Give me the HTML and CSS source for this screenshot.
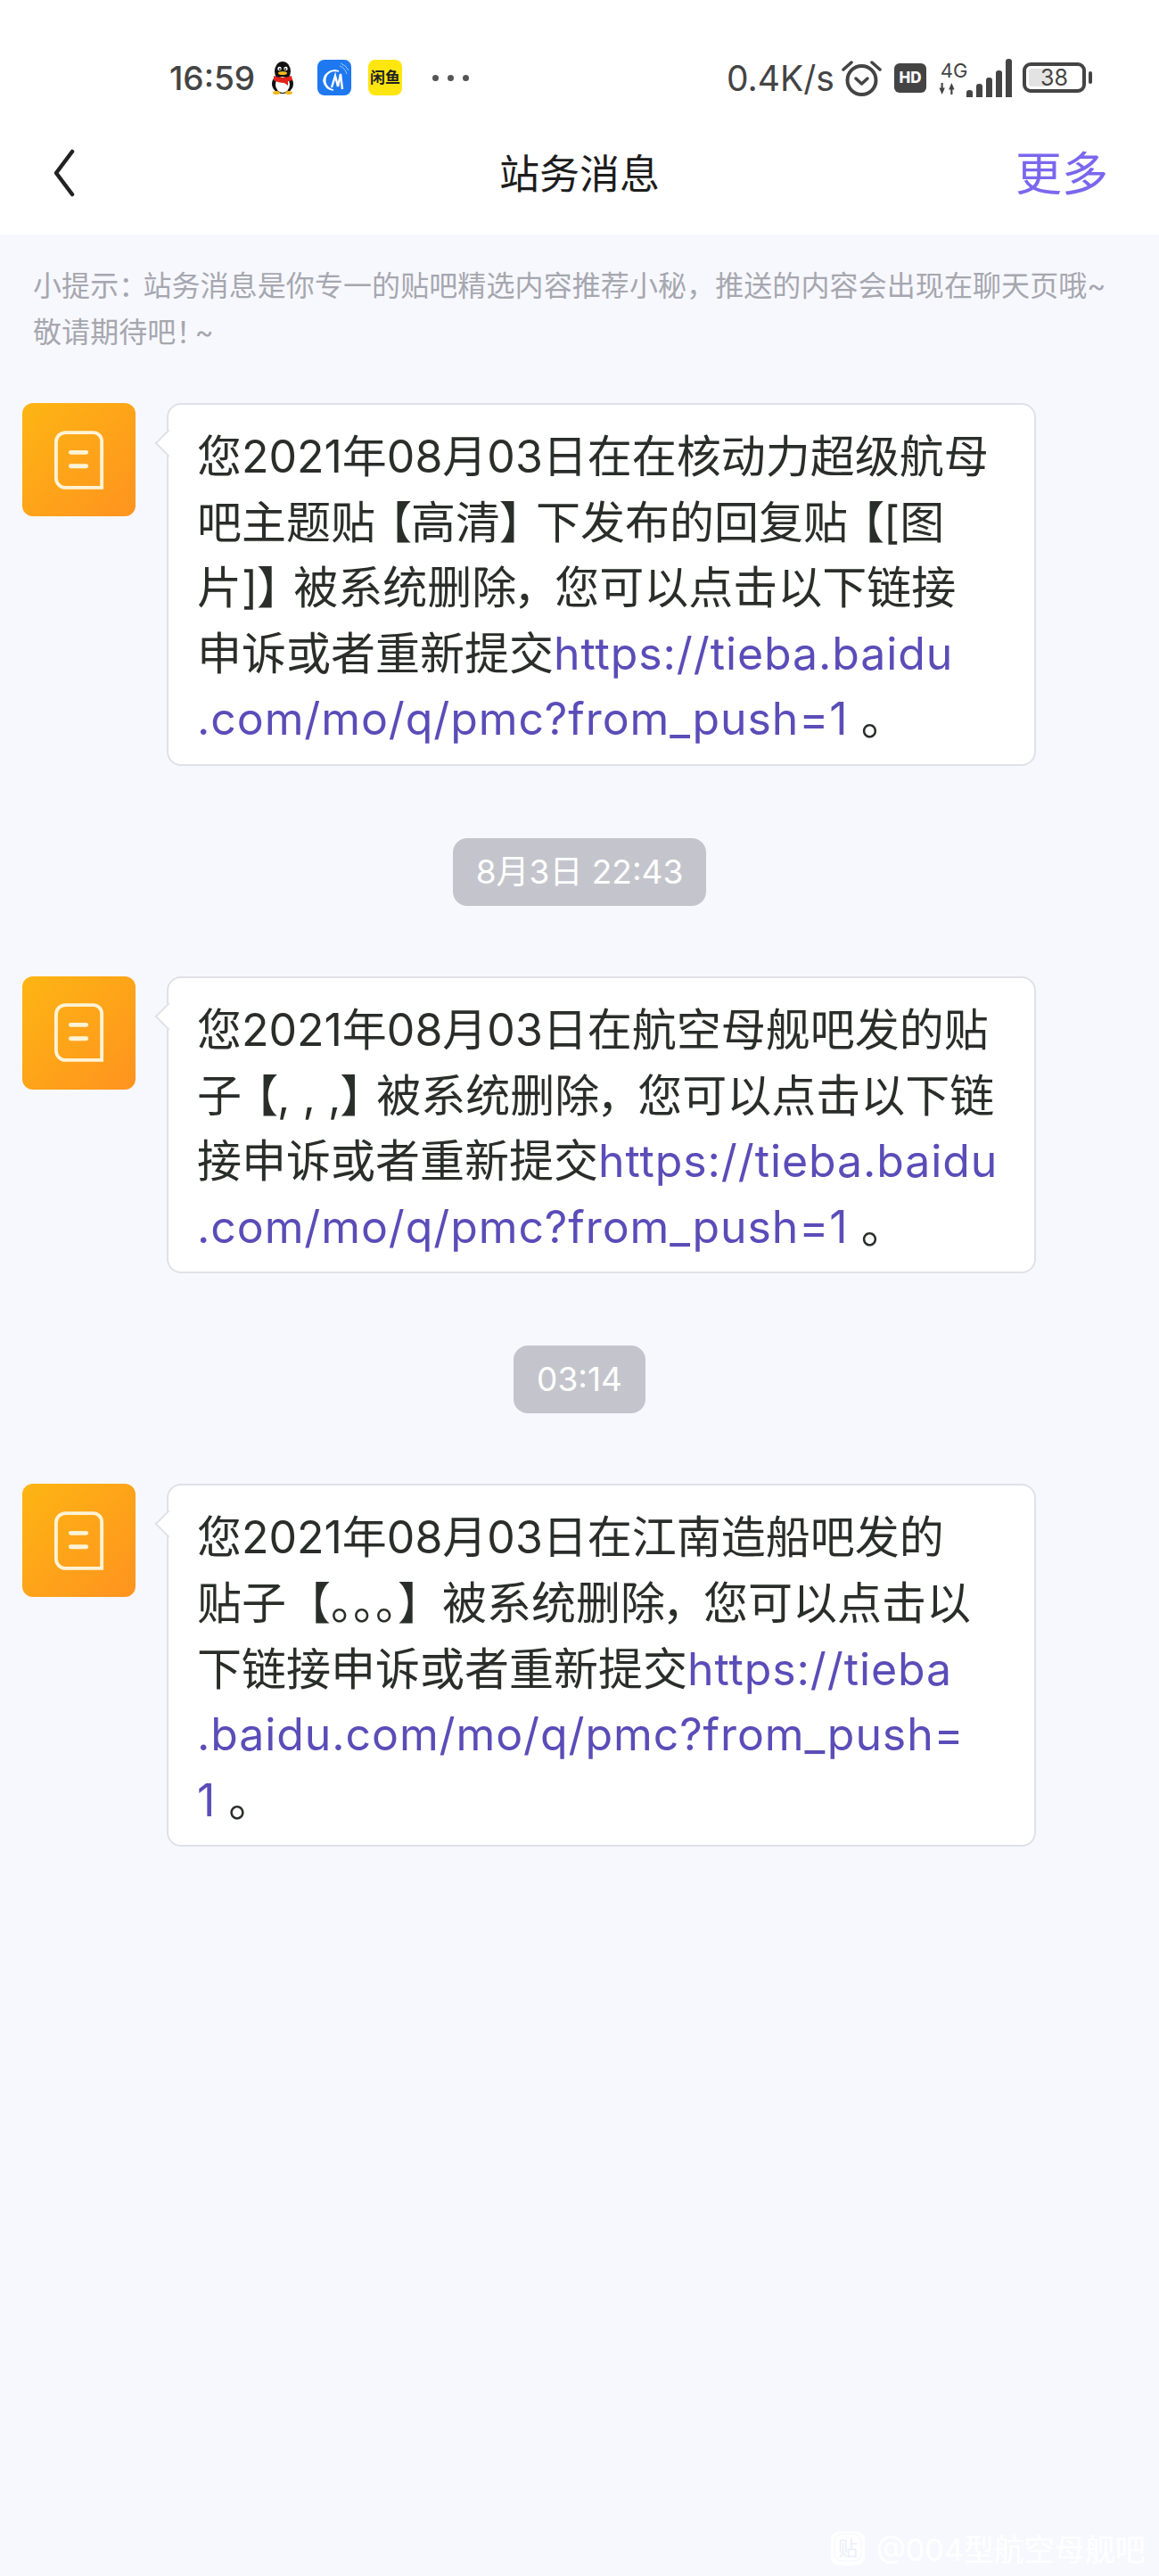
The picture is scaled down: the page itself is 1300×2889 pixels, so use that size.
FILE: index.html
```html
<!DOCTYPE html>
<html lang="zh-CN">
<head>
  <meta charset="UTF-8">
  <title>站务消息</title>
  <link rel="stylesheet" href="styles.css">
</head>
<body>
  <header class="top">
    <div class="status">
      <span class="time">16:59</span>
      <svg class="app qq" viewBox="0 0 38 40">
        <ellipse cx="19" cy="13" rx="9" ry="11" fill="#111"/>
        <ellipse cx="19" cy="27" rx="12" ry="11" fill="#111"/>
        <ellipse cx="19" cy="28" rx="8" ry="9" fill="#fff"/>
        <circle cx="15.5" cy="10" r="2.2" fill="#fff"/><circle cx="22.5" cy="10" r="2.2" fill="#fff"/>
        <circle cx="15.8" cy="10.4" r="1" fill="#111"/><circle cx="22.2" cy="10.4" r="1" fill="#111"/>
        <ellipse cx="19" cy="15" rx="5" ry="2" fill="#f5b81c"/>
        <path d="M9 18q10 4 20 0l1 5q-3 1-5 1v5l-4-3q-7 0-12-3z" fill="#e2231a"/>
        <ellipse cx="12" cy="37" rx="4" ry="2" fill="#f5b81c"/><ellipse cx="26" cy="37" rx="4" ry="2" fill="#f5b81c"/>
      </svg>
      <svg class="app blue" viewBox="0 0 38 40">
        <rect width="38" height="40" rx="8" fill="#1e78f0"/>
        <path d="M24 13a11 11 0 1 0 -6 21q-9-1-11-10c0-8 8-14 17-11z" fill="none" stroke="#fff" stroke-width="1.6"/>
        <path d="M16 31l4-13 3 12 3-14 2 17" fill="none" stroke="#fff" stroke-width="2.4"/>
        <path d="M25 7q6 2 8 9M26 4q6 2 9 8" fill="none" stroke="#9cc6fa" stroke-width="1"/>
      </svg>
      <span class="app fish">闲鱼</span>
      <span class="dots"><i></i><i></i><i></i></span>
      <span class="speed">0.4K/s</span>
      <svg class="alarm" viewBox="0 0 45 42">
        <circle cx="22.5" cy="24" r="16" fill="none" stroke="#444" stroke-width="4"/>
        <path d="M16 22l6.500 6 6.500-6" fill="none" stroke="#444" stroke-width="3.500" stroke-linecap="round" stroke-linejoin="round"/>
        <path d="M2 12l9-8M43 12l-9-8" fill="none" stroke="#444" stroke-width="3.500" stroke-linecap="round"/>
      </svg>
      <span class="hd">HD</span>
      <div class="net">
        <span class="net-type">4G</span>
        <svg class="arrows" viewBox="0 0 18 14"><path d="M1 6h6l-3 7zM11 8h6l-3-7z" fill="#444"/><path d="M4 1v6M14 7v6" stroke="#444" stroke-width="2"/></svg>
      </div>
      <div class="bars"><i class="b1"></i><i class="b2"></i><i class="b3"></i><i class="b4"></i><i class="b5"></i></div>
      <div class="battery"><div class="cell"><span class="level"></span><span class="pct">38</span></div><i class="nub"></i></div>
    </div>
    <nav class="bar">
      <svg class="back" viewBox="0 0 25 54"><path d="M22 3L4 27l18 24" fill="none" stroke="#222" stroke-width="4.500" stroke-linecap="round" stroke-linejoin="round"/></svg>
      <h1>站务消息</h1>
      <a class="more">更多</a>
    </nav>
  </header>

  <p class="hint">小提示<span class="colon">：</span>站务消息是你专一的贴吧精选内容推荐小秘，推送的内容会出现在聊天页哦~<br>敬请期待吧<span class="excl">！</span>~</p>

  <main class="list">
    <div class="msg">
      <div class="avatar">
        <svg viewBox="0 0 60 70"><path d="M14 3h32a10 10 0 0 1 10 10v54H14A11 11 0 0 1 3 56V14A11 11 0 0 1 14 3z" fill="none" stroke="#fff3d6" stroke-width="4"/><path d="M20 26h18M20 42h18" stroke="#fff3d6" stroke-width="5" stroke-linecap="round"/></svg>
      </div>
      <div class="bubble">您2021年08月03日在在核动力超级航母<br>吧主题贴<span class="lb">【</span>高清<span class="rb">】</span>下发布的回复贴<span class="lb">【</span>[图<br>片]<span class="rb">】</span>被系统删除<span class="cm">，</span>您可以点击以下链接<br>申诉或者重新提交<a>https://tieba.baidu<br>.com/mo/q/pmc?from_push=1</a> 。</div>
    </div>
    <div class="stamp"><span>8月3日 22:43</span></div>

    <div class="msg">
      <div class="avatar">
        <svg viewBox="0 0 60 70"><path d="M14 3h32a10 10 0 0 1 10 10v54H14A11 11 0 0 1 3 56V14A11 11 0 0 1 14 3z" fill="none" stroke="#fff3d6" stroke-width="4"/><path d="M20 26h18M20 42h18" stroke="#fff3d6" stroke-width="5" stroke-linecap="round"/></svg>
      </div>
      <div class="bubble">您2021年08月03日在航空母舰吧发的贴<br>子<span class="lb">【</span>, , ,<span class="rb">】</span>被系统删除<span class="cm">，</span>您可以点击以下链<br>接申诉或者重新提交<a>https://tieba.baidu<br>.com/mo/q/pmc?from_push=1</a> 。</div>
    </div>
    <div class="stamp"><span>03:14</span></div>

    <div class="msg">
      <div class="avatar">
        <svg viewBox="0 0 60 70"><path d="M14 3h32a10 10 0 0 1 10 10v54H14A11 11 0 0 1 3 56V14A11 11 0 0 1 14 3z" fill="none" stroke="#fff3d6" stroke-width="4"/><path d="M20 26h18M20 42h18" stroke="#fff3d6" stroke-width="5" stroke-linecap="round"/></svg>
      </div>
      <div class="bubble">您2021年08月03日在江南造船吧发的<br>贴子【。。。】被系统删除<span class="cm">，</span>您可以点击以<br>下链接申诉或者重新提交<a>https://tieba<br>.baidu.com/mo/q/pmc?from_push=<br>1</a> 。</div>
    </div>
  </main>

  <div class="mark">
    <svg viewBox="0 0 40 40"><path d="M10 1h20a9 9 0 0 1 9 9v20a9 9 0 0 1-9 9h-6l-4 1-4-1h-6a9 9 0 0 1-9-9V10a9 9 0 0 1 9-9z" fill="#fff"/><rect x="5" y="4" width="30" height="30" rx="8" fill="none" stroke="#f3f4fb" stroke-width="1"/><text class="mark-char" x="20" y="28" text-anchor="middle">贴</text></svg>
    <span>@004型航空母舰吧</span>
  </div>
</body>
</html>
```

FILE: styles.css
```css
* { box-sizing: border-box; }
html, body { margin: 0; padding: 0; }
body {
  position: relative;
  height: 2889px;
  overflow: hidden;
  background: #f7f8fe;
  font-family: Inter, "Noto Sans CJK SC", sans-serif;
  color: #2a2e2a;
}

/* top white area */
.top { background: #fff; height: 263px; }
.status {
  display: flex;
  align-items: center;
  height: 174px;
  padding: 0 0 0 190px;
  color: #444;
}
.time { font-size: 37px; font-weight: 500; width: 98px; white-space: nowrap; }
.app { display: block; width: 38px; height: 40px; flex: none; }
.qq { margin-left: 10px; }
.blue { margin-left: 20px; }
.fish {
  margin-left: 19px;
  background: #ffe60f;
  border-radius: 8px;
  color: #222;
  font-size: 17px;
  font-weight: 700;
  line-height: 40px;
  text-align: center;
  white-space: nowrap;
}
.dots { display: flex; gap: 10px; margin-left: 34px; width: 43px; }
.dots i { width: 7px; height: 7px; border-radius: 50%; background: #555; }
.speed { margin-left: 287px; width: 127px; font-size: 39px; white-space: nowrap; }
.alarm { width: 45px; height: 42px; margin-left: 2px; flex: none; }
.hd {
  width: 36px;
  height: 33px;
  margin-left: 14px;
  background: #444;
  border-radius: 6px;
  color: #fff;
  font-size: 17px;
  font-weight: 800;
  line-height: 33px;
  text-align: center;
}
.net { width: 36px; margin-left: 13px; text-align: center; }
.net-type { display: block; font-size: 22px; line-height: 22px; }
.arrows { display: block; width: 20px; height: 15px; margin-top: 2px; }
.bars { display: flex; align-items: flex-end; gap: 4px; height: 44px; margin-left: -4px; }
.bars i { width: 7px; background: #444; border-radius: 3px 3px 0 0; }
.b1 { height: 8px; }
.b2 { height: 15px; }
.b3 { height: 22px; }
.b4 { height: 30px; }
.b5 { height: 43px; }
.battery { display: flex; align-items: center; margin-left: 12px; }
.cell {
  position: relative;
  width: 71px;
  height: 34px;
  border: 4px solid #444;
  border-radius: 9px;
  text-align: center;
}
.level { position: absolute; left: 3px; top: 3px; bottom: 3px; width: 24px; background: #e3e3e3; border-radius: 3px; }
.pct { position: relative; font-size: 25px; line-height: 26px; display: block; }
.nub { width: 4px; height: 14px; margin-left: 3px; background: #444; border-radius: 2px; }

.bar {
  position: relative;
  display: flex;
  align-items: center;
  justify-content: center;
  height: 75px;
  margin-top: -19px;
}
.bar h1 { margin: 0; font-size: 45px; font-weight: 400; color: #1d1d1d; }
.back { position: absolute; left: 59px; top: 12px; width: 25px; height: 54px; }
.more { position: absolute; right: 57px; top: 13px; font-size: 52px; color: #7a67ee; line-height: 56px; }

/* hint */
.hint {
  margin: 0;
  padding: 32px 20px 0 37px;
  font-size: 32px;
  letter-spacing: 0.09px;
  line-height: 52px;
  color: #a6a7af;
  white-space: nowrap;
}
/* narrowed punctuation */
.colon, .excl, .lb, .rb, .cm { font-feature-settings: "palt"; }
.colon { padding-right: 11px; }
.excl { padding-right: 5px; }

/* message list */
.list { padding: 53px 0 0 25px; }
.msg { display: flex; align-items: flex-start; }
.avatar {
  display: flex;
  align-items: center;
  justify-content: center;
  width: 127px;
  height: 127px;
  flex: none;
  border-radius: 12px;
  background: linear-gradient(135deg, #fdb513, #ff931f);
}
.avatar svg { width: 58px; height: 68px; }
.bubble {
  position: relative;
  width: 975px;
  margin-left: 35px;
  padding: 22px 20px 13px 32px;
  background: #fff;
  border: 2px solid #e0e1e8;
  border-radius: 16px;
  font-size: 50px;
  line-height: 73.6px;
  white-space: nowrap;
}
.bubble::before {
  content: "";
  position: absolute;
  left: -11px;
  top: 32px;
  width: 20px;
  height: 20px;
  background: #fff;
  border-left: 2px solid #e0e1e8;
  border-bottom: 2px solid #e0e1e8;
  transform: rotate(45deg);
}
.bubble a { color: #5a4db8; letter-spacing: 0.9px; }
.lb { padding-left: 15px; }
.rb { padding-right: 15px; }
.cm { padding-right: 18px; }

.stamp { display: flex; justify-content: center; padding: 81px 25px 79px 0; }
.stamp span {
  height: 76px;
  padding: 0 26px;
  background: #c4c5cc;
  border-radius: 16px;
  color: #fff;
  font-size: 37px;
  line-height: 76px;
}

/* watermark, lies over the page */
.mark {
  position: absolute;
  left: 931px;
  top: 2833px;
  display: flex;
  align-items: center;
  gap: 12px;
  color: #fff;
  font-size: 34px;
  white-space: nowrap;
}
.mark svg { width: 40px; height: 40px; }
.mark-char { font-size: 22px; fill: #eceef8; }
```
